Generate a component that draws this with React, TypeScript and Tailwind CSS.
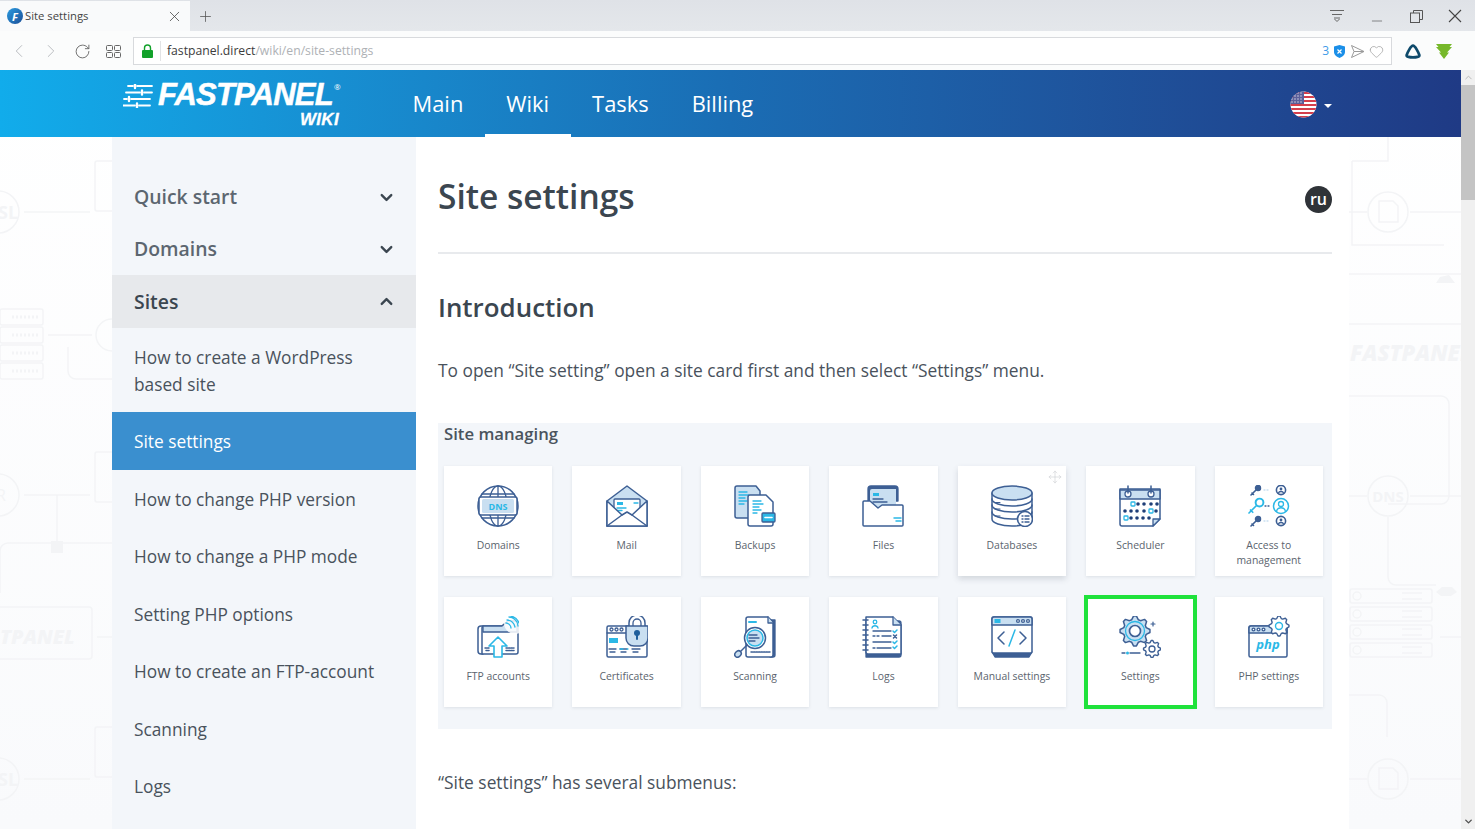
import React from "react";
import { ChevronDown, ChevronUp, ChevronLeft, ChevronRight, RotateCw, Plus, X, Minus, Move, Heart } from "lucide-react";

const D = "#3d5f94";
const C = "#2bb8e6";
const L = "#c9dff1";

const Svg = ({ children }: { children: React.ReactNode }) => (
  <svg width="42" height="42" viewBox="0 0 42 42" fill="none" stroke={D} strokeWidth="1.3" strokeLinecap="round" strokeLinejoin="round">
    {children}
  </svg>
);

const DomainsIcon = () => (
  <Svg>
    <circle cx="21" cy="21" r="20" strokeWidth="1.5" />
    <ellipse cx="21" cy="21" rx="9" ry="20" />
    <path d="M21 1v40M5 9h32M5 33h32" />
    <rect x="2" y="12" width="38" height="18" rx="2" fill="#fff" strokeWidth="1.5" />
    <rect x="5" y="14" width="32" height="14" rx="1.5" fill={L} stroke="none" />
    <text x="21" y="25" textAnchor="middle" fontSize="9" fontWeight="700" fill={C} stroke="none" fontFamily="'Open Sans',sans-serif">DNS</text>
  </Svg>
);
const MailIcon = () => (
  <Svg>
    <path d="M1 16 21 1l20 15v25H1z" fill={L} strokeWidth="1.5" />
    <rect x="8" y="14" width="26" height="18" rx="1" fill="#fff" />
    <path d="M11 17h6v3h-6z" fill={C} stroke="none" />
    <path d="M11 23h9M11 25.5h5M28 18h4" stroke={C} />
    <path d="M1 16v25h40V16L26 30l-5-3-5 3z" fill="#fff" strokeWidth="1.5" />
    <path d="m1 41 15-11M41 41 26 30" strokeWidth="1.5" />
  </Svg>
);
const BackupsIcon = () => (
  <Svg>
    <path d="M1 3a2 2 0 0 1 2-2h19l4 5v27H3a2 2 0 0 1-2-2z" fill={L} strokeWidth="1.5" />
    <path d="M5 7h8M5 10h10M5 13h6M5 16h8M5 19h5" stroke={C} />
    <path d="M14 12a2 2 0 0 1 2-2h16l7 7v22a2 2 0 0 1-2 2H16a2 2 0 0 1-2-2z" fill="#fff" strokeWidth="1.5" />
    <path d="M19 16h8M19 19h10M19 22h6M19 25h8M19 28h4" stroke={C} />
    <rect x="28" y="28" width="13" height="9" rx="1" fill={C} strokeWidth="1.3" />
    <path d="M31 32.5h7" stroke="#fff" strokeWidth="1.6" />
  </Svg>
);
const FilesIcon = () => (
  <Svg>
    <path d="M6 16V4a3 3 0 0 1 3-3h24a3 3 0 0 1 3 3v12z" fill={D} />
    <path d="M8 24V6a2 2 0 0 1 2-2h24v20z" fill={L} stroke="none" />
    <path d="M11 8h6v3h-6z" fill={C} stroke="none" />
    <path d="M11 14h10M11 17h14" />
    <path d="M1 17a1 1 0 0 1 1-1h6l8 7 4-3h20a1 1 0 0 1 1 1v19a1 1 0 0 1-1 1H2a1 1 0 0 1-1-1z" fill="#fff" strokeWidth="1.5" />
    <path d="M32 33h7M34 36h5" stroke={C} strokeWidth="1.5" />
  </Svg>
);
const DatabasesIcon = () => (
  <Svg>
    <path d="M1 8v26c0 4 9 7 20 7s20-3 20-7V8" fill="#fff" strokeWidth="1.5" />
    <ellipse cx="21" cy="8" rx="20" ry="7" fill={L} strokeWidth="1.5" />
    <path d="M1 14c0 4 9 7 20 7s20-3 20-7M1 20c0 4 9 7 20 7s20-3 20-7M1 27c0 4 9 7 20 7s20-3 20-7" strokeWidth="1.5" />
    <path d="M4 17.5h5M4 24h5M4 31h5" strokeWidth="1" />
    <circle cx="34" cy="34" r="7.5" fill="#fff" strokeWidth="1.6" />
    <path d="M31 31h1M34 31h4M31 34h1M34 34h4M31 37h1M34 37h4" strokeWidth="1.4" />
  </Svg>
);
const SchedulerIcon = () => (
  <Svg>
    <path d="M1 4h40v30l-7 7H3a2 2 0 0 1-2-2z" fill="#fff" strokeWidth="1.5" />
    <path d="M1 5h40v9H1z" fill={L} strokeWidth="1.5" />
    <circle cx="9" cy="9" r="3" fill="#fff" />
    <circle cx="32" cy="9" r="3" fill="#fff" />
    <path d="M9 1v7M32 1v7" strokeWidth="1.5" />
    <path d="M34 41v-7h7z" fill={L} />
    {[[20, 19], [26, 19], [33, 19], [39, 19], [7, 26], [13, 26], [19, 26], [26, 26], [38, 26], [13, 33], [19, 33], [25, 33], [31, 33]].map(([x, y]) => (
      <circle key={`${x}-${y}`} cx={x - 1} cy={y} r="1.8" fill="#1f3f78" stroke="none" />
    ))}
    <rect x="12" y="17" width="4" height="4" rx=".8" stroke={C} strokeWidth="1.3" />
    <rect x="30" y="24" width="4" height="4" rx=".8" stroke={C} strokeWidth="1.3" />
    <rect x="5" y="31" width="4" height="4" rx=".8" stroke={C} strokeWidth="1.3" />
  </Svg>
);
const Key = ({ x, y, color, s = 1 }: { x: number; y: number; color: string; s?: number }) => (
  <g transform={`translate(${x} ${y}) scale(${s})`} stroke={color}>
    <circle cx="7" cy="3" r="2.6" fill={color === C ? "#fff" : color} strokeWidth="1.3" />
    <path d="m5 5-5 5M1 8l1.5 1.5" strokeWidth={color === C ? 1.1 : 1.6} />
  </g>
);
const AccessIcon = () => (
  <Svg>
    <Key x={3} y={0} color={D} />
    <Key x={1} y={13} color={C} s={1.5} />
    <Key x={3} y={31} color={D} />
    <path d="M16 5h5M16 36h5" stroke={L} strokeDasharray="1 2" />
    <path d="M17 21h5" stroke={D} strokeDasharray="1 2" />
    <circle cx="33" cy="5" r="4.6" strokeWidth="1.6" />
    <circle cx="33" cy="4" r="1.4" fill={D} stroke="none" />
    <path d="M30.5 8c.5-2 4.5-2 5 0" />
    <circle cx="33" cy="21" r="7.5" stroke={C} strokeWidth="1.5" />
    <circle cx="33" cy="19" r="2.5" stroke={C} />
    <path d="M28.5 26.5c1-5 8-5 9 0" stroke={C} />
    <circle cx="33" cy="36" r="4.6" strokeWidth="1.6" />
    <circle cx="33" cy="35" r="1.4" fill={D} stroke="none" />
    <path d="M30.5 39c.5-2 4.5-2 5 0" />
  </Svg>
);
const FtpIcon = () => (
  <Svg>
    <path d="M1 13a3 3 0 0 1 3-3h2v28H4a3 3 0 0 1-3-3z" fill="#fff" strokeWidth="1.5" />
    <path d="M5 12a2 2 0 0 1 2-2h18l6-5h9a1 1 0 0 1 1 1v30a2 2 0 0 1-2 2H5z" fill="#fff" strokeWidth="1.5" />
    <path d="M6 10h19l6-5h9v11H6z" fill={L} strokeWidth="1.3" />
    <circle cx="38" cy="7" r="11" fill="#fff" stroke="none" opacity=".85" />
    <path d="M32 1c4 0 9 4 9 9M34 0c4 1 7 4 8 7M30 4c4 0 7 3 8 7M29 7c2 0 5 2 5 5" stroke={C} />
    <path d="M21 21 30 30h-5v11h-8V30h-5z" fill="#fff" stroke={C} strokeWidth="1.6" />
    <path d="M8 32h4M9 34.5h3M29 32h8M29 34.5h8" strokeDasharray="1.5 1" strokeWidth="1.5" />
  </Svg>
);
const CertificatesIcon = () => (
  <Svg>
    <rect x="1" y="10" width="40" height="31" rx="1.5" fill="#fff" strokeWidth="1.5" />
    <path d="M1 17h26" />
    <circle cx="5.5" cy="13.5" r="1.5" />
    <circle cx="10.5" cy="13.5" r="1.5" />
    <circle cx="15.5" cy="13.5" r="1.5" />
    <rect x="3" y="22" width="9" height="5" fill={C} stroke="none" />
    <path d="M3 33h7M14 33h7M26 33h8M4 36h5M15 36h5M27 36h5" />
    <path d="M14 33h3M21 33h1" stroke={C} />
    <path d="M23 11V7a8 8 0 0 1 16 0v4" strokeWidth="1.5" fill="#fff" />
    <path d="M27 10V7a4 4 0 0 1 8 0v3" />
    <path d="M20 10h22v12a8 8 0 0 1-8 8h-6a8 8 0 0 1-8-8z" fill={L} strokeWidth="1.5" />
    <circle cx="31" cy="17" r="3" fill="#1f5f9c" stroke="none" />
    <path d="M31 18v5" stroke="#1f5f9c" strokeWidth="2" />
  </Svg>
);
const ScanningIcon = () => (
  <Svg>
    <path d="M36 4h5v35a2 2 0 0 1-2 2h-3z" fill={D} />
    <path d="M12 3a2 2 0 0 1 2-2h20l5 5v33a2 2 0 0 1-2 2H14a2 2 0 0 1-2-2z" fill="#fff" strokeWidth="1.5" />
    <path d="M34 1v6h5" fill={L} />
    <path d="M15 6h7" stroke={C} strokeWidth="2" />
    <path d="M17 36h19" strokeDasharray="1.5 1" strokeWidth="1.5" />
    <circle cx="21" cy="22" r="10.5" fill="#fff" stroke={D} strokeWidth="1.5" />
    <circle cx="21" cy="22" r="8" fill={L} stroke={C} strokeWidth="1.5" />
    <path d="M15 19h8M15 22h10M15 25h6" />
    <path d="m13 29-7 7" strokeWidth="1.5" />
    <ellipse cx="4" cy="38" rx="2.8" ry="3.5" transform="rotate(45 4 38)" fill={L} strokeWidth="1.5" />
  </Svg>
);
const LogsIcon = () => (
  <Svg>
    <path d="M4 5h33a2 2 0 0 1 2 2v32a2 2 0 0 1-2 2H4z" fill={D} />
    <path d="M4 1h27l8 8v29H6a2 2 0 0 1-2-2z" fill="#fff" strokeWidth="1.5" />
    <path d="M31 1v8h8" fill={L} />
    {[4, 9, 14, 19, 24, 29, 34].map((y) => <path key={y} d="M1 0h5" transform={`translate(0 ${y})`} strokeWidth="1.5" />)}
    <circle cx="13" cy="6" r="1.8" stroke={C} />
    <path d="M10 12c.5-3 5.5-3 6 0" stroke={C} />
    <path d="M11 15h18M11 20h2M15 20h2M20 20h9M11 26h18M11 32h2M15 32h14" />
    <path d="m31 15 1.5 1.5L35 14M31 31l1.5 1.5L35 30M31 26l1.5 1.5L35 25" stroke={C} strokeWidth="1.5" />
    <path d="m31.5 19 3 3M34.5 19l-3 3" strokeWidth="1.5" />
  </Svg>
);
const ManualIcon = () => (
  <Svg>
    <path d="M1 36h40l-3 5H4z" fill={D} />
    <rect x="1" y="1" width="40" height="36" rx="1.5" fill="#fff" strokeWidth="1.5" />
    <path d="M1 3a2 2 0 0 1 2-2h36a2 2 0 0 1 2 2v6H1z" fill={L} strokeWidth="1.5" />
    <rect x="3.5" y="3" width="6" height="4" fill={C} stroke="none" />
    <circle cx="27" cy="5" r="1.4" fill="#fff" />
    <circle cx="32" cy="5" r="1.4" fill="#fff" />
    <circle cx="37" cy="5" r="1.4" fill="#fff" />
    <path d="m13 16-6 6 6 6M29 16l6 6-6 6" strokeWidth="1.5" />
    <path d="m24 14-6 16" stroke={C} strokeWidth="1.5" />
  </Svg>
);
const gear = (cx: number, cy: number, r: number, teeth: number) => {
  let d = "";
  for (let i = 0; i < teeth * 4; i++) {
    const a = ((i - 0.5) * Math.PI * 2) / (teeth * 4);
    const rr = i % 4 < 2 ? r : r * 0.78;
    d += `${i === 0 ? "M" : "L"}${(cx + rr * Math.cos(a)).toFixed(2)} ${(cy + rr * Math.sin(a)).toFixed(2)}`;
  }
  return d + "Z";
};
const SettingsIcon = () => (
  <Svg>
    <path d={gear(16, 15, 15, 8)} fill={L} strokeWidth="1.5" />
    <circle cx="16" cy="15" r="9.5" fill={L} stroke={C} />
    <circle cx="16" cy="15" r="5.5" fill="#fff" strokeWidth="1.7" />
    <path d={gear(33, 33, 8.5, 8)} fill="#fff" strokeWidth="1.4" />
    <circle cx="33" cy="33" r="3" />
    <path d="M34 6v4M32 8h4" strokeWidth="1.2" />
    <path d="M3 37h3M11 37h10" />
    <circle cx="8.5" cy="37" r="1.5" fill={C} stroke="none" />
  </Svg>
);
const PhpIcon = () => (
  <Svg>
    <rect x="1" y="10" width="38" height="31" rx="1.5" fill="#fff" strokeWidth="1.5" />
    <path d="M1 12a2 2 0 0 1 2-2h36v7H1z" fill={L} strokeWidth="1.5" />
    <circle cx="5.5" cy="13.5" r="1.4" fill="#fff" />
    <circle cx="10.5" cy="13.5" r="1.4" fill="#fff" />
    <circle cx="15.5" cy="13.5" r="1.4" fill="#fff" />
    <path d={gear(31, 10, 10, 8)} fill="#fff" strokeWidth="1.4" />
    <circle cx="31" cy="10" r="3.5" stroke={C} strokeWidth="1.4" />
    <text x="20" y="33" textAnchor="middle" fontSize="13" fontWeight="700" fontStyle="italic" fill={C} stroke="none" fontFamily="'Open Sans',sans-serif">php</text>
  </Svg>
);

const cards: { label: React.ReactNode; icon: React.ReactNode; kind?: "raised" | "marked" }[] = [
  { label: "Domains", icon: <DomainsIcon /> },
  { label: "Mail", icon: <MailIcon /> },
  { label: "Backups", icon: <BackupsIcon /> },
  { label: "Files", icon: <FilesIcon /> },
  { label: "Databases", icon: <DatabasesIcon />, kind: "raised" },
  { label: "Scheduler", icon: <SchedulerIcon /> },
  { label: <>Access to<br />management</>, icon: <AccessIcon /> },
  { label: "FTP accounts", icon: <FtpIcon /> },
  { label: "Certificates", icon: <CertificatesIcon /> },
  { label: "Scanning", icon: <ScanningIcon /> },
  { label: "Logs", icon: <LogsIcon /> },
  { label: "Manual settings", icon: <ManualIcon /> },
  { label: "Settings", icon: <SettingsIcon />, kind: "marked" },
  { label: "PHP settings", icon: <PhpIcon /> },
];

const BgPattern = () => {
  const s = "#f3f4f6";
  const rack = (x: number, y: number, w: number) =>
    [0, 18, 36, 54].map((o) => (
      <g key={o}>
        <rect x={x} y={y + o} width={w} height="16" rx="2" />
        <path d={`M${x + 12} ${y + o + 8}h26`} strokeDasharray="2 2" strokeWidth="3" />
      </g>
    ));
  return (
    <svg className="absolute left-0 top-[67px]" width="1461" height="692" viewBox="0 0 1461 692" fill="none" stroke={s} strokeWidth="1.5">
      {/* left gutter */}
      <circle cx="-2" cy="75" r="21" />
      <text x="-2" y="82" fontSize="18" fill={s} stroke="none" fontWeight="700" fontFamily="'Open Sans',sans-serif">SL</text>
      <path d="M24 75h66" />
      <rect x="95" y="24" width="20" height="50" rx="2" />
      {rack(0, 172, 43)}
      <path d="M48 198h44M68 210v24a8 8 0 0 0 8 8h36" />
      <circle cx="112" cy="198" r="16" />
      <circle cx="-2" cy="358" r="21" />
      <text x="-4" y="364" fontSize="16" fill={s} stroke="none" fontFamily="'Open Sans',sans-serif">R</text>
      <path d="M24 358h66M57 358v48M0 456v-42a8 8 0 0 1 8-8h104" />
      <rect x="51" y="404" width="12" height="12" fill={s} stroke="none" />
      <rect x="95" y="315" width="20" height="50" rx="2" />
      <rect x="-10" y="470" width="102" height="52" rx="3" />
      <text x="0" y="507" fontSize="20" fontWeight="800" fontStyle="italic" fill={s} stroke="none" fontFamily="'Open Sans',sans-serif">TPANEL</text>
      <path d="M97 500h15" />
      <circle cx="-2" cy="642" r="21" />
      <text x="-2" y="649" fontSize="18" fill={s} stroke="none" fontWeight="700" fontFamily="'Open Sans',sans-serif">SL</text>
      <path d="M24 642h66" />
      <rect x="95" y="590" width="20" height="50" rx="2" />
      {/* right gutter */}
      <path d="M1388 0v24h-36M1352 24v84h92M1349 75h18M1410 75h51" />
      <circle cx="1388" cy="75" r="20" />
      <path d="M1379 64h14l5 5v16h-19z" />
      <path d="M1436 146l4-6 9-2 6 8z" fill={s} stroke="none" />
      <path d="M1349 137h112M1349 187h112" />
      <text x="1350" y="224" fontSize="22" fontWeight="800" fontStyle="italic" fill={s} stroke="none" fontFamily="'Open Sans',sans-serif">FASTPANEL</text>
      <path d="M1349 259h92a8 8 0 0 1 8 8v92a8 8 0 0 1-8 8h-53" />
      <circle cx="1388" cy="359" r="20" />
      <text x="1388" y="365" textAnchor="middle" fontSize="15" fontWeight="700" fill={s} stroke="none" fontFamily="'Open Sans',sans-serif">DNS</text>
      <path d="M1349 359h18M1410 359h51M1388 380v60a8 8 0 0 0 8 8h40" />
      <path d="M1436 455l6-5h10l5 5-6 4h-10z" fill={s} stroke="none" />
      {[447, 465, 483, 501].map((y) => (
        <g key={y}>
          <rect x="1350" y={y + 5} width="82" height="14" rx="2" />
          <circle cx="1357" cy={y + 12} r="4" />
          <path d={`M1402 ${y + 9}h20M1402 ${y + 15}h20`} />
        </g>
      ))}
      <path d="M1440 500h21M1349 558h30a8 8 0 0 1 8 8v34" />
      <circle cx="1388" cy="642" r="20" />
      <path d="M1379 631h14l5 5v16h-19zM1349 642h18M1410 642h51" />
    </svg>
  );
};

const Logo = () => (
  <div className="relative h-[67px] w-[240px] shrink-0">
    <svg className="absolute left-[11px] top-[14px]" width="30" height="24" viewBox="0 0 30 24" stroke="#fff" strokeWidth="1.8" strokeLinecap="round">
      <path d="M5 2h5M14 2h15M3 8.5h14M21 8.5h8M1 15h3M8 15h19M0 21.5h12M16 21.5h11" />
      <path d="M12 0v4M19 6.5v4M6 13v4M14 19.5v4" strokeWidth="2.4" />
    </svg>
    <span className="absolute left-[46px] top-[9px] text-[31px] font-bold italic leading-[32px] tracking-[-.8px] text-white [-webkit-text-stroke:.5px_white] [font-family:'Liberation_Sans',sans-serif]">FASTPANEL</span>
    <span className="absolute left-[222px] top-[12px] text-[8px] leading-[10px] text-white">®</span>
    <span className="absolute left-[188px] top-[42px] text-[17px] font-bold italic leading-[16px] tracking-[.3px] text-white [-webkit-text-stroke:.3px_white] [font-family:'Liberation_Sans',sans-serif]">WIKI</span>
  </div>
);

const Flag = () => (
  <svg width="27" height="27" viewBox="0 0 27 27">
    <defs><clipPath id="flagc"><circle cx="13.5" cy="13.5" r="13" /></clipPath></defs>
    <g clipPath="url(#flagc)">
      <rect width="27" height="27" fill="#fff" />
      {[0, 4, 8, 12, 16, 20, 24].map((y) => <rect key={y} y={y + 1} width="27" height="2" fill="#d43f4c" />)}
      <rect width="14" height="13" fill="#5a5f9a" />
      {[2, 5, 8, 11].map((y) => [2, 5, 8, 11].map((x) => <circle key={`${x}${y}`} cx={x} cy={y} r=".7" fill="#e5e5f0" />))}
    </g>
  </svg>
);

const navItems = ["Main", "Wiki", "Tasks", "Billing"];
const subItems = ["How to change PHP version", "How to change a PHP mode", "Setting PHP options", "How to create an FTP-account", "Scanning", "Logs"];

export default function App() {
  return (
    <div className="flex h-[829px] w-[1475px] flex-col overflow-hidden bg-white [font-family:'Open_Sans',sans-serif]">
      {/* tab strip */}
      <div className="flex h-[31px] shrink-0 items-end bg-gradient-to-b from-[#dfe2e7] to-[#e4e7eb] pr-[14px] text-[#555]">
        <div className="flex h-[30px] w-[190px] items-center bg-[#f9fafb] pl-[7px] pr-[7px]">
          <span className="flex h-[16px] w-[16px] items-center justify-center rounded-full bg-gradient-to-br from-[#2a9be0] to-[#1c4f98] text-[11px] font-bold italic leading-none text-white">F</span>
          <span className="ml-[2px] flex-1 text-[11.3px] text-[#444]">Site settings</span>
          <X size={17} strokeWidth={1.1} className="text-[#444]" />
        </div>
        <div className="flex h-[30px] w-[30px] items-center justify-center"><Plus size={17} strokeWidth={1.1} className="text-[#555]" /></div>
        <div className="flex-1" />
        <div className="flex h-[30px] items-center">
          <svg width="16" height="14" viewBox="0 0 16 14" fill="none" stroke="#666" strokeWidth="1" className="mr-[24px]"><path d="M1 1.5h14M3 5.5h10M5 9h6" /><path d="m5.5 10 2.5 2.5 2.5-2.5" /></svg>
          <Minus size={16} strokeWidth={1} className="mr-[25px] mt-[10px] text-[#555]" />
          <svg width="13" height="13" viewBox="0 0 13 13" fill="none" stroke="#555" strokeWidth="1" className="mr-[25px]"><rect x=".5" y="3" width="9" height="9.5" /><path d="M3.5 3V.5h9v9h-3" /></svg>
          <svg width="14" height="14" viewBox="0 0 14 14" fill="none" stroke="#444" strokeWidth="1.1" className="mr-[-1px]"><path d="m1 1 12 12M13 1 1 13" /></svg>
        </div>
      </div>
      {/* toolbar */}
      <div className="flex h-[39px] shrink-0 items-center bg-[#fbfcfc] pt-[1px]">
        <ChevronLeft size={22} strokeWidth={1} className="ml-[8px] text-[#b5b8bc]" />
        <ChevronRight size={22} strokeWidth={1} className="ml-[10px] text-[#b5b8bc]" />
        <RotateCw size={17} strokeWidth={1.3} className="ml-[12px] text-[#666]" />
        <svg width="15" height="13" viewBox="0 0 15 13" fill="none" stroke="#666" className="ml-[15px]"><rect x=".5" y=".5" width="6" height="5" rx="1" /><rect x="8.5" y=".5" width="6" height="5" rx="1" /><rect x=".5" y="7.5" width="6" height="5" rx="1" /><rect x="8.5" y="7.5" width="6" height="5" rx="1" /></svg>
        <div className="ml-[12px] flex h-[28px] w-[1259px] items-center border border-[#d8dadd] bg-white pl-[8px] pr-[7px]">
          <svg width="11" height="14" viewBox="0 0 11 14"><path d="M2.5 6V4a3 3 0 0 1 6 0v2" fill="none" stroke="#12a12a" strokeWidth="1.4" /><rect y="6" width="11" height="8" rx="1" fill="#12a12a" /></svg>
          <div className="ml-[7px] h-[20px] w-px bg-[#e2e3e5]" />
          <span className="ml-[6px] flex-1 pt-px text-[12.2px] leading-none text-[#3c3c3c]">fastpanel.direct<span className="text-[#aeb1b5]">/wiki/en/site-settings</span></span>
          <span className="text-[12px] text-[#3f9be8]">3</span>
          <svg width="11" height="13" viewBox="0 0 11 13" className="ml-[5px]"><path d="M5.5 0 11 1.5V7c0 3-3 5-5.5 6C3 12 0 10 0 7V1.5z" fill="#1b8fe8" /><path d="m3.5 4.5 4 4M7.5 4.5l-4 4" stroke="#fff" strokeWidth="1.2" /></svg>
          <svg width="14" height="13" viewBox="0 0 14 13" fill="none" stroke="#9a9a9a" className="ml-[6px]"><path d="M.5.5 13 6.5.5 12.5 3 6.5zM3 6.5h10" /></svg>
          <Heart size={15} strokeWidth={1} className="ml-[4px] text-[#8f8f8f]" />
        </div>
        <svg width="18" height="17" viewBox="0 0 17 16" fill="none" className="ml-[12px]"><path d="M8.5 2.5c-2 0-5.5 7-6 9-.3 1.5 3 2 6 2s6.3-.5 6-2c-.5-2-4-9-6-9z" stroke="#0e4a6b" strokeWidth="2.6" strokeLinejoin="round" /></svg>
        <svg width="16" height="16" viewBox="0 0 16 16" className="ml-[14px]"><path d="M0 1h16l-2.500 3H16l-5 5.500H13L8 16 3 9.500h2L0 4h2.500z" fill="#76b82a" /></svg>
      </div>

      <div className="flex min-h-0 flex-1">
        <div className="relative min-w-0 flex-1 overflow-hidden bg-gradient-to-b from-white to-[#f9fafc]">
          {/* site header */}
          <div className="relative z-10 flex h-[67px] items-stretch bg-gradient-to-r from-[#11aceb] via-[#1a6db4] to-[#1f3a85] pl-[112px]">
            <Logo />
            <nav className="ml-[39px] flex">
              {navItems.map((n) => (
                <div key={n} className={`flex items-center border-b-[3px] pt-[5px] px-[21.5px] text-[21.9px] text-white ${n === "Wiki" ? "border-b-white" : "border-b-transparent"}`}>{n}</div>
              ))}
            </nav>
            <div className="flex-1" />
            <div className="mr-[129px] flex items-center pt-[2px]">
              <Flag />
              <div className="ml-[7px] mt-[2px] h-0 w-0 border-x-[4px] border-t-[4px] border-x-transparent border-t-white" />
            </div>
          </div>

          <BgPattern />

          {/* page */}
          <div className="relative ml-[112px] flex h-[692px] w-[1237px] bg-white">
            <aside className="w-[304px] shrink-0 bg-[#f3f6fa] pt-[34px] text-[17.3px] text-[#49525c]">
              <div className="flex h-[52px] items-center justify-between pl-[22px] pr-[20px] text-[19.4px] font-semibold text-[#5c6670]">Quick start<ChevronDown size={19} strokeWidth={3} className="text-[#3b4650]" /></div>
              <div className="flex h-[52px] items-center justify-between pl-[22px] pr-[20px] text-[19.4px] font-semibold text-[#5c6670]">Domains<ChevronDown size={19} strokeWidth={3} className="text-[#3b4650]" /></div>
              <div className="flex h-[53px] items-center justify-between bg-[#e7e9ec] pl-[22px] pr-[20px] text-[19.4px] font-semibold text-[#3b4650]">Sites<ChevronUp size={19} strokeWidth={3} className="text-[#3b4650]" /></div>
              <div className="px-[22px] pb-[14px] pt-[16px] leading-[27px]">How to create a WordPress<br />based site</div>
              <div className="flex h-[58px] items-center bg-[#3a8fcf] px-[22px] pt-[1px] text-white">Site settings</div>
              {subItems.map((s) => (
                <div key={s} className="flex h-[57.5px] items-center px-[22px] pt-[2px]">{s}</div>
              ))}
            </aside>
            <main className="ml-[22px] w-[894px] shrink-0 text-[#3b4650]">
              <div className="flex h-[117px] items-start justify-between border-b-2 border-[#e8eaed]">
                <h1 className="mt-[34px] text-[33.5px] font-semibold leading-[50px]">Site settings</h1>
                <div className="mt-[49px] flex h-[27px] w-[27px] items-center justify-center rounded-full bg-[#2f3338] pb-[2px] text-[16px] font-semibold leading-none text-white">ru</div>
              </div>
              <h2 className="mt-[33px] text-[25.9px] font-semibold leading-[40px]">Introduction</h2>
              <p className="mt-[30px] text-[17.35px] leading-[27px] text-[#49525c]">To open “Site setting” open a site card first and then select “Settings” menu.</p>
              <div className="mt-[39px] h-[306px] w-[894px] bg-[#f3f6fa] pl-[6px] pr-[9px]">
                <div className="text-[16.7px] font-semibold leading-[22px] text-[#4a545e]">Site managing</div>
                <div className="mt-[21px] grid grid-cols-7 gap-x-[20px] gap-y-[21px]">
                  {cards.map((c, i) => (
                    <div
                      key={i}
                      className={`relative flex h-[110px] flex-col items-center bg-white pt-[19px] ${c.kind === "raised" ? "shadow-[0_3px_6px_rgba(60,70,90,.18)]" : "shadow-[0_1px_3px_rgba(60,70,90,.12)]"} ${c.kind === "marked" ? "outline-4 outline-offset-[-2px] outline-[#1fe23b]" : ""}`}
                    >
                      {c.kind === "raised" && <Move size={14} strokeWidth={1} className="absolute right-[4px] top-[4px] text-[#c9ccd0]" />}
                      {c.icon}
                      <div className="mt-[11px] text-center text-[10.4px] leading-[14.5px] text-[#5b646e]">{c.label}</div>
                    </div>
                  ))}
                </div>
              </div>
              <p className="mt-[40px] text-[17.35px] leading-[27px] text-[#49525c]">“Site settings” has several submenus:</p>
            </main>
          </div>
        </div>
        {/* scrollbar */}
        <div className="flex w-[14px] shrink-0 flex-col bg-[#f0f0f0]">
          <div className="flex h-[15px] items-center justify-center"><ChevronUp size={11} strokeWidth={2} className="text-[#b5b5b5]" /></div>
          <div className="h-[115px] bg-[#c4c4c4]" />
          <div className="flex-1" />
          <div className="flex h-[15px] items-center justify-center"><ChevronDown size={11} strokeWidth={3} className="text-[#505050]" /></div>
        </div>
      </div>
    </div>
  );
}
